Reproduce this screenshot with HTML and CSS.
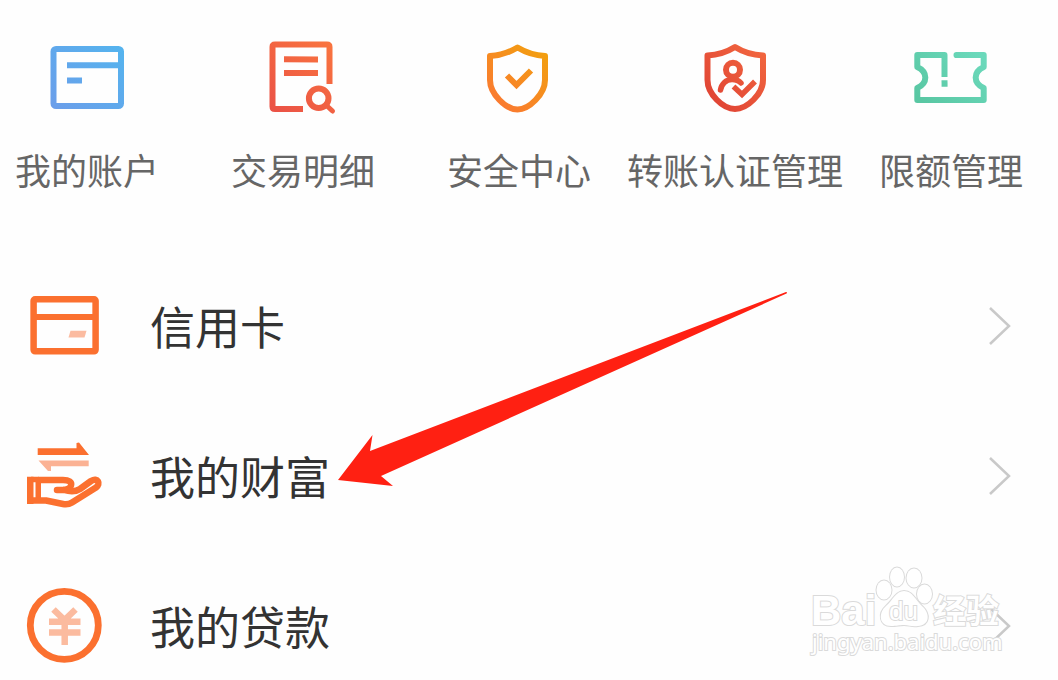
FILE: index.html
```
<!DOCTYPE html>
<html lang="zh-CN">
<head>
    <meta charset="UTF-8">
    <meta name="viewport" content="width=device-width, initial-scale=1.0">
    <title>我的</title>
    <link rel="stylesheet" href="styles.css">
</head>
<body>
    <div class="page">
        <!-- 快捷入口 -->
        <nav class="shortcuts">
            <a class="shortcut" href="#account">
                <svg class="icon" viewBox="0 0 80 80" fill="none" stroke="url(#blue)" stroke-width="6">
                    <defs>
                        <linearGradient id="blue" gradientUnits="userSpaceOnUse" x1="70" y1="8" x2="8" y2="72">
                            <stop offset="0" stop-color="#55b3ee"/>
                            <stop offset="1" stop-color="#6b9eea"/>
                        </linearGradient>
                    </defs>
                    <rect x="6.5" y="11" width="67.5" height="57" rx="2.5"/>
                    <path d="M20 27.2L74 27.3M20 42.4L35 42.5"/>
                </svg>
                <span>我的账户</span>
            </a>
            <a class="shortcut" href="#detail">
                <svg class="icon" viewBox="0 0 80 80" fill="none" stroke="url(#red)" stroke-width="6">
                    <defs>
                        <linearGradient id="red" gradientUnits="userSpaceOnUse" x1="68" y1="6" x2="8" y2="74">
                            <stop offset="0" stop-color="#f9743f"/>
                            <stop offset="1" stop-color="#ea5146"/>
                        </linearGradient>
                    </defs>
                    <path d="M66.5 46V9Q66.5 6.5 64 6.5H12Q9.5 6.5 9.5 9V68.5Q9.5 71 12 71H40"/>
                    <path d="M21 21.3L55 21.4M21 35L55 35.1"/>
                    <circle cx="55.7" cy="60.3" r="9.8"/>
                    <path d="M63 67L69.5 73" stroke-width="5" stroke-linecap="round"/>
                </svg>
                <span>交易明细</span>
            </a>
            <a class="shortcut" href="#security">
                <svg class="icon" viewBox="0 0 80 80" fill="none" stroke="url(#amber)" stroke-width="6" stroke-linejoin="round">
                    <defs>
                        <linearGradient id="amber" gradientUnits="userSpaceOnUse" x1="66" y1="12" x2="18" y2="66">
                            <stop offset="0" stop-color="#f2a00e"/>
                            <stop offset="1" stop-color="#fa7a31"/>
                        </linearGradient>
                    </defs>
                    <path d="M38.5 9.5C31 14 21 17.5 11 18V42C11 56 27 71.5 38.5 71.5S66 56 66 42V18C56 17.5 46 14 38.5 9.5Z"/>
                    <path d="M28 37.5L37.5 47L52 32.5" stroke-linejoin="miter"/>
                </svg>
                <span>安全中心</span>
            </a>
            <a class="shortcut" href="#transfer">
                <svg class="icon" viewBox="0 0 80 80" fill="none" stroke="url(#coral)" stroke-width="6" stroke-linejoin="round">
                    <defs>
                        <linearGradient id="coral" gradientUnits="userSpaceOnUse" x1="68" y1="10" x2="18" y2="60">
                            <stop offset="0" stop-color="#f2673f"/>
                            <stop offset="1" stop-color="#e14635"/>
                        </linearGradient>
                    </defs>
                    <path d="M40 9C32 14 22 17 12.5 17.5V42C12.5 56 28 71 40 71S68 56 68 42V17.5C58 17 48 14 40 9Z"/>
                    <circle cx="38" cy="31.7" r="7"/>
                    <path d="M25.5 52C26.5 46 31 41.5 37 41.5Q43 41.5 46 45" stroke-width="5.5" stroke-linecap="round"/>
                    <path d="M38.5 48.5L47 56.5L60 43.5" stroke-width="5.5" stroke-linejoin="miter"/>
                </svg>
                <span>转账认证管理</span>
            </a>
            <a class="shortcut" href="#limit">
                <svg class="icon" viewBox="0 0 80 80" fill="none" stroke="url(#green)" stroke-width="6" stroke-linejoin="round">
                    <defs>
                        <linearGradient id="green" gradientUnits="userSpaceOnUse" x1="66" y1="14" x2="14" y2="66">
                            <stop offset="0" stop-color="#6bd9bb"/>
                            <stop offset="1" stop-color="#59c7a3"/>
                        </linearGradient>
                    </defs>
                    <path d="M33.5 39V17H6.3V29C17 34 17 45 6.3 50V62H72.7V50C62 45 62 34 72.7 29V17H48"/>
                    <path d="M45.5 17L48 17.1" stroke-linecap="round"/>
                    <path d="M33.5 42.3L33.6 48.7"/>
                </svg>
                <span>限额管理</span>
            </a>
        </nav>

        <!-- 业务列表 -->
        <main class="menu">
            <a class="menu-item" href="#credit">
                <svg class="icon" viewBox="0 0 80 80">
                    <rect x="9.6" y="13.3" width="62" height="52" rx="1.5" fill="none" stroke="#fb702f" stroke-width="6.5"/>
                    <path d="M8 31H73" stroke="#fb702f" stroke-width="6"/>
                    <path d="M46.5 44.7H62.5L60.5 51.5H44.5Z" fill="#fbbba0"/>
                </svg>
                <span class="menu-text">信用卡</span>
                <svg class="chevron" viewBox="0 0 24 40"><path d="M2 2L21 20L2 38"/></svg>
            </a>
            <a class="menu-item" href="#wealth">
                <svg class="icon" viewBox="0 0 80 80">
                    <path d="M13.7 12.3H52.5V7L55 6.5L65 19H13.7Z" fill="#fb702f"/>
                    <path d="M14.5 24.5H64.7V30.3H27V35H24Z" fill="#fbb294"/>
                    <path d="M3 40.7H9.5V68H3ZM11.5 41H17V67H11.5Z" fill="#fb702f"/>
                    <g fill="none" stroke="#fb702f" stroke-width="6.5" stroke-linecap="round" stroke-linejoin="round">
                        <path d="M15 44H39C45 44 48 46 47 49.500Q46 53.5 39 54H33"/>
                        <path d="M40 54Q50 57 56 53L67 45C74 41 77 48 72 51.5L48 66.5Q44 69 39 68L22 64.5H7"/>
                    </g>
                    <path d="M7 43.5H15" stroke="#fb702f" stroke-width="5.5"/>
                </svg>
                <span class="menu-text">我的财富</span>
                <svg class="chevron" viewBox="0 0 24 40"><path d="M2 2L21 20L2 38"/></svg>
            </a>
            <a class="menu-item" href="#loan">
                <svg class="icon" viewBox="0 0 80 80" fill="none">
                    <circle cx="40.3" cy="39.3" r="34" stroke="#fb702f" stroke-width="6.8"/>
                    <path d="M29.5 23.5L40.5 34L51.500 23.5M25 35.7H56.5M25 46.5H56.5M40.7 34V59" stroke="#fbbb9f" stroke-width="6.5"/>
                </svg>
                <span class="menu-text">我的贷款</span>
                <svg class="chevron" viewBox="0 0 24 40"><path d="M2 2L21 20L2 38"/></svg>
            </a>
        </main>

        <!-- 指向“我的财富”的箭头 -->
        <svg class="pointer" viewBox="0 0 450 195">
            <path d="M0 188L34.5 143L32 159L448 0Q450 0 448.5 1.5L43 184L55 194Z" fill="#ff2012"/>
        </svg>

        <!-- 水印 -->
        <svg class="watermark" viewBox="0 0 200 100">
            <text class="wm-brand" x="1" y="60">Bai</text>
            <g class="wm-paw">
                <ellipse cx="74" cy="25" rx="7.5" ry="9.5"/>
                <ellipse cx="87" cy="12" rx="7" ry="9.5"/>
                <ellipse cx="104" cy="13" rx="7.5" ry="9.5"/>
                <ellipse cx="114.500" cy="29" rx="7.5" ry="9.5"/>
                <path d="M94 26C86 26 83 35 76 41C68 48 69 61 81 61C87 61 89 60 94 60S102 62 108 61C120 60 120 49 113 42C105 35 103 26 94 26Z"/>
            </g>
            <text class="wm-du" x="79" y="55">du</text>
            <text class="wm-name" x="123" y="58">经验</text>
            <text class="wm-url" x="2" y="85">jingyan.baidu.com</text>
        </svg>
    </div>
</body>
</html>
```
FILE: styles.css
```
body {
    margin: 0;
    background-color: #fefefe;
    font-family: "Noto Sans CJK SC", sans-serif;
}
a {
    color: inherit;
    text-decoration: none;
}
.page {
    position: relative;
    overflow: hidden;
}
.icon {
    display: block;
    flex: none;
    width: 80px;
    height: 80px;
}
/* 快捷入口 */
.shortcuts {
    display: flex;
    margin: 0 -1px 0 -21px;
    padding-top: 38px;
}
.shortcut {
    display: flex;
    flex: 1;
    flex-direction: column;
    align-items: center;
    gap: 33px;
    color: #666;
    font-size: 36px;
    line-height: 36px;
    white-space: nowrap;
}
/* 业务列表 */
.menu {
    display: flex;
    flex-direction: column;
    gap: 50px;
    padding: 89px 46px 4px 24px;
}
.menu-item {
    display: flex;
    align-items: center;
    height: 100px;
    color: #333;
    font-size: 45px;
    line-height: 50px;
}
.menu-text {
    flex: 1;
    margin-left: 46px;
}
.chevron {
    width: 24px;
    height: 40px;
    fill: none;
    stroke: #c9c9c9;
    stroke-width: 2.5;
}
/* 箭头 */
.pointer {
    position: absolute;
    top: 292px;
    left: 338px;
    width: 450px;
    height: 195px;
}
/* 水印 */
.watermark {
    position: absolute;
    right: 48px;
    bottom: 15px;
    width: 200px;
    height: 100px;
    overflow: visible;
    fill: #fff;
    stroke: #dadada;
    stroke-width: 2;
    paint-order: stroke;
    font-family: "Liberation Sans", "Noto Sans CJK SC", sans-serif;
    font-weight: bold;
}
.wm-brand {
    font-size: 42px;
}
.wm-du {
    font-size: 26px;
    font-weight: normal;
}
.wm-name {
    font-family: "Noto Sans CJK SC", sans-serif;
    font-size: 33px;
}
.wm-url {
    font-family: "Noto Sans", sans-serif;
    font-size: 22px;
    font-weight: normal;
}
```
